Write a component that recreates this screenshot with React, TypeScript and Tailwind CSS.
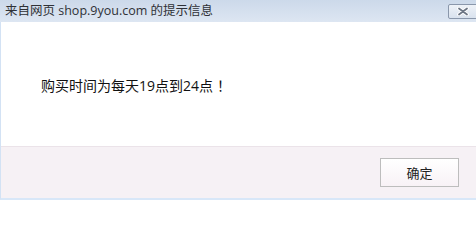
import React from "react";

export default function App() {
  return (
    <div
      className="w-[476px] h-[200px] overflow-hidden flex flex-col bg-white"
      style={{ fontFamily: '"Open Sans", "Noto Sans CJK SC", sans-serif' }}
    >
      {/* title bar */}
      <div className="h-[22px] shrink-0 flex items-start bg-gradient-to-b from-[#ccd9ea] to-[#dde6f2] relative">
        <span className="pl-[5px] pt-[3px] text-[12.5px] leading-[16px] text-[#2f3136] whitespace-nowrap">
          来自网页 shop.9you.com 的提示信息
        </span>
        <div className="absolute left-[448px] top-[4px] w-[34px] h-[15px] rounded-[2px] border border-[#8a97ab] bg-gradient-to-b from-[#eef2f8] to-[#d9e2ee] flex items-center pl-[8px]">
          <svg width="12" height="9" viewBox="0 0 12 9">
            <path d="M2 1.5 L10 7.5 M10 1.5 L2 7.5" stroke="#ffffff" strokeWidth="3.6" strokeLinecap="round" />
            <path d="M2 1.5 L10 7.5 M10 1.5 L2 7.5" stroke="#6d7685" strokeWidth="1.8" strokeLinecap="round" />
          </svg>
        </div>
      </div>
      {/* body */}
      <div className="flex-1 flex flex-col border-l border-[#d3e2f4] border-b-2 border-b-[#d8e7f8]">
        <div className="h-[124px] shrink-0 bg-white pl-[40px] pt-[55px]">
          <p className="text-[14px] leading-[16px] text-[#111] whitespace-nowrap">
            购买时间为每天19点到24点<span className="ml-[4px]" style={{ fontFamily: '"Noto Sans CJK SC", sans-serif' }}>！</span>
          </p>
        </div>
        <div className="flex-1 border-t border-[#ebe3e9] bg-[#f6f1f5] flex items-center justify-end pr-[17px]">
          <button className="w-[79px] h-[29px] border border-[#bdbdbd] bg-gradient-to-b from-[#ffffff] to-[#f8f2f6] text-[13px] leading-[16px] text-[#222] flex items-center justify-center">
            确定
          </button>
        </div>
      </div>
    </div>
  );
}
